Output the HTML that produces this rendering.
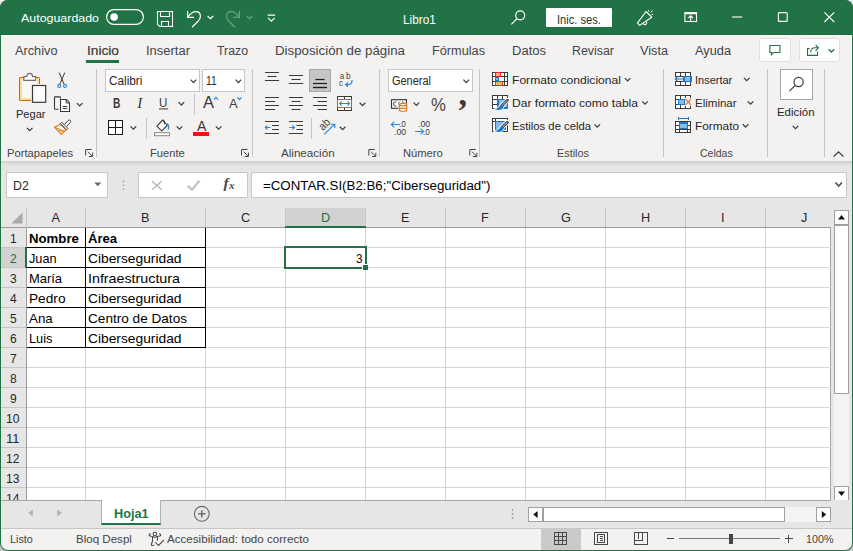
<!DOCTYPE html>
<html lang="es"><head><meta charset="utf-8"><title>Libro1 - Excel</title>
<style>
html,body{margin:0;padding:0;background:#c6c6c6;}
body{background:linear-gradient(#f1ebef 0,#f1ebef 50%,#c6c6c6 50%,#c6c6c6 100%);}
body{width:853px;height:551px;overflow:hidden;font-family:"Liberation Sans",sans-serif;}
#app{position:relative;width:853px;height:551px;overflow:hidden;background:#217346;border-radius:8px;}
#app div{position:absolute;box-sizing:border-box;}
.t{position:absolute;white-space:pre;transform-origin:0 50%;font-family:"Liberation Sans",sans-serif;}
#icons{position:absolute;left:0;top:0;}

</style></head>
<body>
<div id="app">
<div id="title" style="left:0;top:0;width:853px;height:35px;background:#217346;border-bottom:1px solid #1f6c42"></div>
<div id="ribbon" style="left:1px;top:35px;width:851px;height:126px;background:#f3f2f1;border-top:1px solid #fff;border-left:1px solid #fbfbfa;border-right:1px solid #fbfbfa"></div>
<div id="tabul" style="left:86px;top:60px;width:33px;height:3px;background:#217346"></div>
<div id="mid" style="left:1px;top:161px;width:851px;height:340px;background:#e6e6e6"></div>
<div id="shadow" style="left:1px;top:161px;width:851px;height:5px;background:linear-gradient(#d0d0d0,#e6e6e6)"></div>
<!-- signin -->
<div style="left:546px;top:8px;width:66px;height:19px;background:#fff;border-radius:1px"></div>
<!-- comment/share buttons -->
<div style="left:759px;top:38px;width:32px;height:24px;background:#fff;border:1px solid #e1dfdd;border-radius:3px"></div>
<div style="left:799px;top:38px;width:41px;height:24px;background:#fff;border:1px solid #e1dfdd;border-radius:3px"></div>
<!-- ribbon separators -->
<div class="sep" style="left:96px;top:69px;width:1px;height:88px;background:#c8c6c4"></div>
<div class="sep" style="left:252px;top:69px;width:1px;height:88px;background:#c8c6c4"></div>
<div class="sep" style="left:379px;top:69px;width:1px;height:88px;background:#c8c6c4"></div>
<div class="sep" style="left:479px;top:69px;width:1px;height:88px;background:#c8c6c4"></div>
<div class="sep" style="left:663px;top:69px;width:1px;height:88px;background:#c8c6c4"></div>
<div class="sep" style="left:767px;top:69px;width:1px;height:88px;background:#c8c6c4"></div>
<div class="sep" style="left:824px;top:69px;width:1px;height:88px;background:#c8c6c4"></div>
<div class="sep" style="left:194px;top:94px;width:1px;height:21px;background:#c8c6c4"></div>
<div class="sep" style="left:146px;top:118px;width:1px;height:21px;background:#c8c6c4"></div>
<div class="sep" style="left:311px;top:118px;width:1px;height:21px;background:#c8c6c4"></div>
<!-- combo boxes -->
<div style="left:105px;top:69px;width:95px;height:23px;background:#fff;border:1px solid #c8c6c4"></div>
<div style="left:202px;top:69px;width:43px;height:23px;background:#fff;border:1px solid #c8c6c4"></div>
<div style="left:388px;top:69px;width:85px;height:23px;background:#fff;border:1px solid #c8c6c4"></div>
<!-- selected align bottom -->
<div style="left:309px;top:69px;width:22px;height:23px;background:#c8c6c4;border:1px solid #a8a6a4"></div>
<!-- Edicion box -->
<div style="left:780px;top:69px;width:33px;height:31px;background:#fff;border:1px solid #a6a6a6"></div>
<!-- formula bar -->
<div style="left:6px;top:172px;width:102px;height:26px;background:#fff;border:1px solid #c6c6c6;border-radius:1px"></div>
<div style="left:138px;top:172px;width:110px;height:26px;background:#fff;border:1px solid #c6c6c6;border-radius:1px"></div>
<div style="left:251px;top:172px;width:596px;height:26px;background:#fff;border:1px solid #c6c6c6;border-radius:1px"></div>
<!-- grid -->
<div id="grid" style="left:1px;top:208px;width:830px;height:292px;background:#fff"></div>
<div id="colhdr" style="left:1px;top:208px;width:830px;height:19px;background:#e6e6e6"></div>
<div id="rowhdr" style="left:1px;top:208px;width:25px;height:292px;background:#e6e6e6"></div>
<div id="dhdr" style="left:285px;top:208px;width:81px;height:20px;background:#d2d2d2"></div><div style="left:285px;top:226px;width:81px;height:2px;background:#217346;z-index:3"></div>
<div id="r2hdr" style="left:1px;top:248px;width:25px;height:19px;background:#d2d2d2"></div><div style="left:25px;top:247px;width:2px;height:21px;background:#217346;z-index:3"></div>
<div id="sel" style="left:284px;top:246px;width:83px;height:23px;border:2px solid #217346;z-index:3"></div>
<div id="selh" style="left:362px;top:264px;width:6px;height:6px;background:#217346;border:1px solid #fff;border-right:0;border-bottom:0;z-index:4"></div>
<!-- v scrollbar -->
<div style="left:831px;top:208px;width:21px;height:293px;background:#e6e6e6"></div>
<div style="left:834px;top:225px;width:15px;height:262px;background:#f3f3f3"></div>
<div style="left:834px;top:210px;width:15px;height:15px;background:#fff;border:1px solid #a0a0a0"></div>
<div style="left:834px;top:225px;width:15px;height:169px;background:#fff;border:1px solid #a0a0a0"></div>
<div style="left:834px;top:486px;width:15px;height:15px;background:#fff;border:1px solid #a0a0a0"></div>
<div style="left:830px;top:227px;width:1px;height:274px;background:#a6a6a6"></div>
<!-- sheet tabs / status -->
<div id="tabbar" style="left:1px;top:500px;width:851px;height:29px;background:#e6e6e6;border-bottom:1px solid #c6c6c6"></div><div style="left:1px;top:500px;width:830px;height:1px;background:#a6a6a6"></div>
<div id="sheettab" style="left:101px;top:500px;width:60px;height:25px;background:#fff;border-left:1px solid #b0b0b0;border-right:1px solid #b0b0b0;border-bottom:2px solid #217346"></div>
<div id="status" style="left:1px;top:529px;width:851px;height:21px;background:#f3f2f1;border-radius:0 0 7px 7px"></div>
<div style="left:541px;top:529px;width:40px;height:21px;background:#cacaca"></div>
<!-- h scrollbar -->
<div style="left:785px;top:507px;width:32px;height:15px;background:#f3f3f3"></div>
<div style="left:528px;top:507px;width:15px;height:15px;background:#fff;border:1px solid #a0a0a0"></div>
<div style="left:543px;top:507px;width:242px;height:15px;background:#fff;border:1px solid #a0a0a0"></div>
<div style="left:816px;top:507px;width:15px;height:15px;background:#fff;border:1px solid #a0a0a0"></div>

<svg id="icons" width="853" height="551" viewBox="0 0 853 551">
<g id="gridlines" shape-rendering="crispEdges" fill="none" stroke-width="1">
<line x1="27" y1="247.5" x2="831" y2="247.5" stroke="#d4d4d4"/>
<line x1="1" y1="247.5" x2="26" y2="247.5" stroke="#c6c6c6"/>
<line x1="27" y1="267.5" x2="831" y2="267.5" stroke="#d4d4d4"/>
<line x1="1" y1="267.5" x2="26" y2="267.5" stroke="#c6c6c6"/>
<line x1="27" y1="287.5" x2="831" y2="287.5" stroke="#d4d4d4"/>
<line x1="1" y1="287.5" x2="26" y2="287.5" stroke="#c6c6c6"/>
<line x1="27" y1="307.5" x2="831" y2="307.5" stroke="#d4d4d4"/>
<line x1="1" y1="307.5" x2="26" y2="307.5" stroke="#c6c6c6"/>
<line x1="27" y1="327.5" x2="831" y2="327.5" stroke="#d4d4d4"/>
<line x1="1" y1="327.5" x2="26" y2="327.5" stroke="#c6c6c6"/>
<line x1="27" y1="347.5" x2="831" y2="347.5" stroke="#d4d4d4"/>
<line x1="1" y1="347.5" x2="26" y2="347.5" stroke="#c6c6c6"/>
<line x1="27" y1="367.5" x2="831" y2="367.5" stroke="#d4d4d4"/>
<line x1="1" y1="367.5" x2="26" y2="367.5" stroke="#c6c6c6"/>
<line x1="27" y1="387.5" x2="831" y2="387.5" stroke="#d4d4d4"/>
<line x1="1" y1="387.5" x2="26" y2="387.5" stroke="#c6c6c6"/>
<line x1="27" y1="407.5" x2="831" y2="407.5" stroke="#d4d4d4"/>
<line x1="1" y1="407.5" x2="26" y2="407.5" stroke="#c6c6c6"/>
<line x1="27" y1="427.5" x2="831" y2="427.5" stroke="#d4d4d4"/>
<line x1="1" y1="427.5" x2="26" y2="427.5" stroke="#c6c6c6"/>
<line x1="27" y1="447.5" x2="831" y2="447.5" stroke="#d4d4d4"/>
<line x1="1" y1="447.5" x2="26" y2="447.5" stroke="#c6c6c6"/>
<line x1="27" y1="467.5" x2="831" y2="467.5" stroke="#d4d4d4"/>
<line x1="1" y1="467.5" x2="26" y2="467.5" stroke="#c6c6c6"/>
<line x1="27" y1="487.5" x2="831" y2="487.5" stroke="#d4d4d4"/>
<line x1="1" y1="487.5" x2="26" y2="487.5" stroke="#c6c6c6"/>
<line x1="85.5" y1="228" x2="85.5" y2="500" stroke="#d4d4d4"/>
<line x1="85.5" y1="208" x2="85.5" y2="227" stroke="#c6c6c6"/>
<line x1="205.5" y1="228" x2="205.5" y2="500" stroke="#d4d4d4"/>
<line x1="205.5" y1="208" x2="205.5" y2="227" stroke="#c6c6c6"/>
<line x1="285.5" y1="228" x2="285.5" y2="500" stroke="#d4d4d4"/>
<line x1="285.5" y1="208" x2="285.5" y2="227" stroke="#c6c6c6"/>
<line x1="365.5" y1="228" x2="365.5" y2="500" stroke="#d4d4d4"/>
<line x1="365.5" y1="208" x2="365.5" y2="227" stroke="#c6c6c6"/>
<line x1="445.5" y1="228" x2="445.5" y2="500" stroke="#d4d4d4"/>
<line x1="445.5" y1="208" x2="445.5" y2="227" stroke="#c6c6c6"/>
<line x1="525.5" y1="228" x2="525.5" y2="500" stroke="#d4d4d4"/>
<line x1="525.5" y1="208" x2="525.5" y2="227" stroke="#c6c6c6"/>
<line x1="605.5" y1="228" x2="605.5" y2="500" stroke="#d4d4d4"/>
<line x1="605.5" y1="208" x2="605.5" y2="227" stroke="#c6c6c6"/>
<line x1="685.5" y1="228" x2="685.5" y2="500" stroke="#d4d4d4"/>
<line x1="685.5" y1="208" x2="685.5" y2="227" stroke="#c6c6c6"/>
<line x1="765.5" y1="228" x2="765.5" y2="500" stroke="#d4d4d4"/>
<line x1="765.5" y1="208" x2="765.5" y2="227" stroke="#c6c6c6"/>
<line x1="1" y1="227.5" x2="831" y2="227.5" stroke="#9b9b9b"/>
<line x1="26.5" y1="208" x2="26.5" y2="228" stroke="#c6c6c6"/>
<line x1="26.5" y1="228" x2="26.5" y2="500" stroke="#9b9b9b"/>
<line x1="27" y1="247.5" x2="206" y2="247.5" stroke="#000"/>
<line x1="27" y1="267.5" x2="206" y2="267.5" stroke="#000"/>
<line x1="27" y1="287.5" x2="206" y2="287.5" stroke="#000"/>
<line x1="27" y1="307.5" x2="206" y2="307.5" stroke="#000"/>
<line x1="27" y1="327.5" x2="206" y2="327.5" stroke="#000"/>
<line x1="27" y1="347.5" x2="206" y2="347.5" stroke="#000"/>
<line x1="85.5" y1="228" x2="85.5" y2="348" stroke="#000"/>
<line x1="205.5" y1="228" x2="205.5" y2="348" stroke="#000"/>
</g>
<path d="M22.5 212.5 L22.5 223.5 L11.5 223.5 Z" fill="#a9a9a9"/>
<g id="titleicons" fill="none" stroke="#fff" stroke-width="1.2">
<rect x="106.6" y="9.6" width="36.8" height="14.8" rx="7.4"/>
<circle cx="114.1" cy="17" r="3.8" fill="#fff" stroke="none"/>
<g stroke-width="1.1">
<path d="M157.5 11.5 H172.5 V26.5 H159.7 L157.5 24.3 Z"/>
<path d="M160.5 11.5 V16.5 H169.5 V11.5"/>
<path d="M161.5 26.5 V21.5 H168.5 V26.5"/>
</g>
<path d="M187.6 11 V17.4 H194" stroke-width="1.2"/>
<path d="M187.8 17.2 C190.5 13.2 193.2 11.6 196 11.6 C198.8 11.6 200.4 13.8 200.4 16.4 C200.4 18.6 199.3 20 197.8 21.5 L192 27.2"/>
<path d="M207.6 16 L210.4 18.7 L213.2 16"/>
<g opacity="0.33">
<path d="M239.4 11 V17.4 H233"/>
<path d="M239.2 17.2 C236.5 13.2 233.8 11.6 231 11.6 C228.2 11.6 226.6 13.8 226.6 16.4 C226.6 18.6 227.7 20 229.2 21.5 L235 27.2"/>
<path d="M246.8 16 L249.6 18.7 L252.4 16"/>
</g>
<path d="M267.6 15.1 H275.2 M268 17.9 L271.4 21.2 L274.8 17.9"/>
<!-- search -->
<circle cx="520.2" cy="15.3" r="4.5"/>
<path d="M517 18.6 L511.4 24.4"/>
<!-- megaphone -->
<path d="M646 11.5 L651.7 17.2 L639.7 25.4 L637.4 23.1 Z" stroke-linejoin="round" stroke-width="1.1"/>
<path d="M643 23.3 C643.4 24.6 645 25 646 24.2 C646.8 23.6 647 22.6 646.4 21.6" stroke-width="1.1"/>
<path d="M648.3 10.2 L648.9 11.8 M650.8 12.4 L652.7 10.4 M651.4 14.7 L653.1 14.2" stroke-width="1"/>
<!-- ribbon display -->
<rect x="684.9" y="12.7" width="11.6" height="8.8" stroke-width="1.1"/>
<path d="M684.9 13.4 H696.5" stroke-width="1.8"/>
<path d="M690.7 21.4 V16.2 M688.4 18 L690.7 15.8 L693 18" stroke-width="1.1"/>
<!-- window controls -->
<path d="M732 17 H742.2" stroke-width="1.1"/>
<rect x="778.4" y="12.6" width="8.8" height="8.8" rx="1" stroke-width="1.1"/>
<path d="M824.4 12.3 L834.2 22 M834.2 12.3 L824.4 22" stroke-width="1.1"/>
</g>
<g id="tabicons" fill="none" stroke="#217346" stroke-width="1.1">
<path d="M769.9 45.5 H779.9 V52.5 H773.6 L771.4 54.6 V52.5 H769.9 Z"/>
<path d="M809.6 48.6 H807.5 V55.4 H817.5 V51.6"/>
<path d="M810.6 52.4 C810.8 49.4 812.6 47.8 815.2 47.8 H818.2 M815.6 44.8 L818.4 47.8 L815.6 50.8"/>
<path d="M828.6 49.2 L831.4 52 L834.2 49.2" stroke-width="1.3"/>
</g>
<g id="clip">
<rect x="19.5" y="77.5" width="20" height="23" rx="0.6" fill="#ffdb92" stroke="#c8690e" stroke-width="1"/>
<rect x="22" y="79.6" width="15.2" height="18.6" fill="#f8f8f8"/>
<path d="M23.8 80.4 V76.6 H26.8 C26.9 74.6 28.1 73.4 29.7 73.4 C31.3 73.4 32.5 74.6 32.6 76.6 H35.6 V80.4 Z" fill="#fff" stroke="#707070" stroke-width="1.1"/>
<rect x="31" y="84" width="16" height="19.6" fill="#f3f2f1"/>
<rect x="32.5" y="85.5" width="13.2" height="16.8" fill="#fcfcfc" stroke="#3b3a39" stroke-width="1.2"/>
<path d="M26.90 127.85 L29.70 130.75 L32.50 127.85" fill="none" stroke="#3b3a39" stroke-width="1.2"/>
<path d="M59.2 72.6 L64.2 84.4 M64.8 72.6 L59.8 84.4" stroke="#3b3a39" stroke-width="1" fill="none"/>
<circle cx="59.2" cy="85.9" r="1.5" fill="none" stroke="#2b88d8" stroke-width="1.1"/>
<circle cx="65" cy="85.9" r="1.5" fill="none" stroke="#2b88d8" stroke-width="1.1"/>
<path d="M60.5 98.4 V97.7 C60.5 97.2 60.2 96.9 59.7 96.9 H55.1 C54.7 96.9 54.5 97.2 54.5 97.6 V108.6 C54.5 109 54.7 109.3 55.1 109.3 H58.4" fill="none" stroke="#3b3a39" stroke-width="1.1"/>
<path d="M60.5 99.5 H66.4 L69.5 102.7 V111.5 H60.5 Z" fill="#fff" stroke="#3b3a39" stroke-width="1.1"/>
<path d="M66.2 99.8 V103 H69.3" fill="none" stroke="#3b3a39" stroke-width="1"/>
<path d="M62.6 106.5 H67.4 M62.6 108.6 H67.4" stroke="#3b3a39" stroke-width="1"/>
<path d="M76.90 103.05 L79.70 105.95 L82.50 103.05" fill="none" stroke="#3b3a39" stroke-width="1.2"/>
<path d="M60.4 124.4 L54.6 127.2 L61.2 134.4 L66.2 129.8 Z" fill="#fff" stroke="#d87b1e" stroke-width="1.1"/>
<path d="M57.4 130.2 L61.2 134.2 L64.4 131.4 Z" fill="#fbd28a" stroke="#d87b1e" stroke-width="0.8"/>
<path d="M54.8 127.3 L64.8 131.3" stroke="#d87b1e" stroke-width="1" fill="none"/>
<path d="M64.7 124.1 L68.2 120.5 C68.8 119.9 69.7 119.9 70.3 120.5 C70.9 121.1 70.9 122 70.3 122.6 L66.8 126.1" fill="#fff" stroke="#3b3a39" stroke-width="1"/>
<path d="M61.7 122.2 L67.9 128.4 L66.5 129.8 L60.3 123.6 Z" fill="#fff" stroke="#3b3a39" stroke-width="1"/>
<path d="M85.6 155.5 V149.5 H91.6 M87.8 151.7 L92.19999999999999 156.1 M92.6 152.7 V156.5 H88.8" fill="none" stroke="#484644" stroke-width="1"/>
</g>
<g id="fontgrp">
<path d="M190.70 79.65 L193.50 82.55 L196.30 79.65" fill="none" stroke="#3b3a39" stroke-width="1.2"/>
<path d="M235.60 79.65 L238.40 82.55 L241.20 79.65" fill="none" stroke="#3b3a39" stroke-width="1.2"/>
<path d="M159 108.9 H168.2" stroke="#3b3a39" stroke-width="1"/>
<path d="M178.60 102.15 L181.40 105.05 L184.20 102.15" fill="none" stroke="#3b3a39" stroke-width="1.2"/>
<path d="M214 99.6 L216 97.4 L218 99.6" fill="none" stroke="#2b88d8" stroke-width="1.2"/>
<path d="M237.4 97.4 L239.4 99.6 L241.4 97.4" fill="none" stroke="#2b88d8" stroke-width="1.2"/>
<g shape-rendering="crispEdges"><rect x="108.5" y="120.5" width="14" height="14" fill="#fff" stroke="#1b1b1b" stroke-width="1.4"/>
<path d="M115.5 120.5 V134.5 M108.5 127.5 H122.5" stroke="#1b1b1b" stroke-width="1.4"/></g>
<path d="M130.60 126.35 L133.40 129.25 L136.20 126.35" fill="none" stroke="#3b3a39" stroke-width="1.2"/>
<path d="M162.8 120 L156.9 126.2 L161.7 130.9 L167.2 125.5 Z" fill="#fff" stroke="#3b3a39" stroke-width="1.1" stroke-linejoin="round"/>
<path d="M162.8 120 C164.2 120.6 164.8 122.2 164.4 124.2" fill="none" stroke="#3b3a39" stroke-width="1.1"/>
<path d="M166.6 123.6 C168.6 124.6 169 127.2 168.2 129.6" fill="none" stroke="#2b88d8" stroke-width="1.3"/>
<rect x="154.5" y="132.7" width="15" height="3" fill="#fff" stroke="#8a8886" stroke-width="1"/>
<path d="M176.70 126.35 L179.50 129.25 L182.30 126.35" fill="none" stroke="#3b3a39" stroke-width="1.2"/>
<rect x="193" y="132" width="16" height="4" fill="#ee1111"/>
<path d="M215.80 126.35 L218.60 129.25 L221.40 126.35" fill="none" stroke="#3b3a39" stroke-width="1.2"/>
<path d="M241.5 155.5 V149.5 H247.5 M243.7 151.7 L248.1 156.1 M248.5 152.7 V156.5 H244.7" fill="none" stroke="#484644" stroke-width="1"/>
</g>
<g id="aligngrp" fill="none">
<path d="M265 72.5 H279" stroke="#3b3a39" stroke-width="1"/>
<path d="M267.5 76.5 H276.5" stroke="#3b3a39" stroke-width="1"/>
<path d="M265 80.5 H279" stroke="#3b3a39" stroke-width="1"/>
<path d="M289 75.5 H303" stroke="#3b3a39" stroke-width="1"/>
<path d="M291.5 79.5 H300.5" stroke="#3b3a39" stroke-width="1"/>
<path d="M289 83.5 H303" stroke="#3b3a39" stroke-width="1"/>
<path d="M315.5 79.5 H324.5" stroke="#1b1b1b" stroke-width="1.2"/>
<path d="M313 83.5 H327" stroke="#1b1b1b" stroke-width="1.2"/>
<path d="M313 87.5 H327" stroke="#1b1b1b" stroke-width="1.4"/>
<path d="M265 97.5 H279" stroke="#3b3a39" stroke-width="1"/>
<path d="M289 97.5 H303" stroke="#3b3a39" stroke-width="1"/>
<path d="M313 97.5 H327" stroke="#3b3a39" stroke-width="1"/>
<path d="M265 101.5 H275" stroke="#3b3a39" stroke-width="1"/>
<path d="M291.5 101.5 H300.5" stroke="#3b3a39" stroke-width="1"/>
<path d="M317.5 101.5 H327" stroke="#3b3a39" stroke-width="1"/>
<path d="M265 105.5 H279" stroke="#3b3a39" stroke-width="1"/>
<path d="M289 105.5 H303" stroke="#3b3a39" stroke-width="1"/>
<path d="M313 105.5 H327" stroke="#3b3a39" stroke-width="1"/>
<path d="M265 109.5 H275" stroke="#3b3a39" stroke-width="1"/>
<path d="M291.5 109.5 H300.5" stroke="#3b3a39" stroke-width="1"/>
<path d="M317.5 109.5 H327" stroke="#3b3a39" stroke-width="1"/>
<rect x="337.5" y="96.5" width="14" height="14" stroke="#3b3a39" stroke-width="1" fill="#fff" shape-rendering="crispEdges"/>
<path d="M344.5 96.5 V99.5 M344.5 107.5 V110.5" stroke="#3b3a39" stroke-width="1" shape-rendering="crispEdges"/>
<rect x="337.5" y="99.5" width="14" height="8" stroke="#2b88d8" stroke-width="1" fill="#fff" shape-rendering="crispEdges"/>
<path d="M339.6 103.5 H349.6 M341.7 101.4 L339.5 103.5 L341.7 105.6 M347.5 101.4 L349.7 103.5 L347.5 105.6" stroke="#2b88d8" stroke-width="1.1"/>
<path d="M359.70 102.75 L362.50 105.65 L365.30 102.75" fill="none" stroke="#3b3a39" stroke-width="1.2"/>
<path d="M265 121.5 H279" stroke="#3b3a39" stroke-width="1"/>
<path d="M289 121.5 H303" stroke="#3b3a39" stroke-width="1"/>
<path d="M265 133.5 H279" stroke="#3b3a39" stroke-width="1"/>
<path d="M289 133.5 H303" stroke="#3b3a39" stroke-width="1"/>
<path d="M272 125.5 H279" stroke="#3b3a39" stroke-width="1"/>
<path d="M296.5 125.5 H303" stroke="#3b3a39" stroke-width="1"/>
<path d="M272 129.5 H279" stroke="#3b3a39" stroke-width="1"/>
<path d="M296.5 129.5 H303" stroke="#3b3a39" stroke-width="1"/>
<path d="M265.4 127.5 H270.4 M267.4 125.4 L265.3 127.5 L267.4 129.6" stroke="#2b88d8" stroke-width="1.1"/>
<path d="M289.2 127.5 H294.4 M292.4 125.4 L294.5 127.5 L292.4 129.6" stroke="#2b88d8" stroke-width="1.1"/>
<path d="M324.2 134.4 L334.4 124.3 M330.8 124.2 H334.8 V128" stroke="#2b88d8" stroke-width="1.1"/>
<path d="M339.80 126.75 L342.60 129.65 L345.40 126.75" fill="none" stroke="#3b3a39" stroke-width="1.2"/>
<path d="M352 80 C352.4 82.8 350.6 84.7 348 84.7 H345.6 M347.9 82.5 L345.6 84.7 L347.9 86.9" stroke="#2b88d8" stroke-width="1.2"/>
<path d="M368.8 155.5 V149.5 H374.8 M371.0 151.7 L375.40000000000003 156.1 M375.8 152.7 V156.5 H372.0" fill="none" stroke="#484644" stroke-width="1"/>
</g>
<g id="numgrp" fill="none">
<path d="M463.40 79.65 L466.20 82.55 L469.00 79.65" fill="none" stroke="#3b3a39" stroke-width="1.2"/>
<rect x="391.5" y="99.7" width="14.9" height="8.6" fill="#fff" stroke="#3b3a39" stroke-width="1.2"/>
<path d="M396.4 101.9 C394.6 101.5 393.6 102.6 393.6 104 C393.6 105.4 394.6 106.5 396.4 106.1" stroke="#3b3a39" stroke-width="1"/>
<path d="M399.6 101.8 C398.2 102.4 398.2 105.6 399.6 106.2 M402 101.8 C403.4 102.2 404.2 103 404.2 104" stroke="#3b3a39" stroke-width="1"/>
<path d="M399.4 104.6 V110.2 C399.4 111.6 406.6 111.6 406.6 110.2 V104.6 Z" fill="#fff" stroke="#f3f2f1" stroke-width="2.4"/>
<path d="M399.4 104.6 V110.2 C399.4 111.6 406.6 111.6 406.6 110.2 V104.6" fill="#fff" stroke="#d87b1e" stroke-width="1.2"/>
<ellipse cx="403" cy="104.6" rx="3.6" ry="1.3" fill="#fff" stroke="#d87b1e" stroke-width="1.2"/>
<path d="M399.4 107.4 C399.4 108.8 406.6 108.8 406.6 107.4" stroke="#d87b1e" stroke-width="1.2"/>
<path d="M413.60 102.55 L416.40 105.45 L419.20 102.55" fill="none" stroke="#3b3a39" stroke-width="1.2"/>
<path d="M391.4 124.5 H400 M394.2 121.7 L391.3 124.5 L394.2 127.3" stroke="#2b88d8" stroke-width="1.1"/>
<path d="M415.2 131.5 H423.4 M420.6 128.7 L423.5 131.5 L420.6 134.3" stroke="#2b88d8" stroke-width="1.1"/>
<path d="M469.8 155.5 V149.5 H475.8 M472.0 151.7 L476.40000000000003 156.1 M476.8 152.7 V156.5 H473.0" fill="none" stroke="#484644" stroke-width="1"/>
</g>
<g id="stylegrp" fill="none">
<g shape-rendering="crispEdges">
<rect x="492.5" y="72.5" width="15" height="13" fill="#fff" stroke="#3b3a39" stroke-width="1"/>
<path d="M492.5 76.5 H507.5 M492.5 81.5 H507.5 M495.5 72.5 V85.5 M504.5 72.5 V85.5" stroke="#3b3a39" stroke-width="1"/>
<rect x="495.5" y="72.5" width="5" height="4" fill="#f6b868" stroke="#e8262a" stroke-width="1.2"/>
<rect x="495.6" y="77.2" width="3" height="3.8" fill="#83bbec" stroke="#1e78c8" stroke-width="1.2"/>
<rect x="495.5" y="81.5" width="7" height="4" fill="#f6b868" stroke="#e8262a" stroke-width="1.2"/>
</g>
<g shape-rendering="crispEdges">
<rect x="492.5" y="95.5" width="15" height="13" fill="#fff" stroke="#3b3a39" stroke-width="1"/>
<path d="M492.5 99.5 H507.5 M492.5 104.5 H498 M497.5 95.5 V108.5 M502.5 95.5 V99.5" stroke="#3b3a39" stroke-width="1"/>
<rect x="498" y="99.5" width="9.5" height="8.5" fill="#83bbec" stroke="#1e78c8" stroke-width="1.2"/>
</g>
<path d="M507.4 100.2 L501.79999999999995 105.5" stroke="#fff" stroke-width="4.6" stroke-linecap="round"/><path d="M502.2 104.60000000000001 C499.79999999999995 105.2 499.0 108.2 495.0 109.2 C498.4 110.8 503.0 110.0 503.79999999999995 106.4 Z" fill="#fff" stroke="#fff" stroke-width="1.6"/><path d="M507.4 100.2 L501.79999999999995 105.5" stroke="#3b3a39" stroke-width="2.8" stroke-linecap="round"/><path d="M507.29999999999995 100.3 L502.2 105.10000000000001" stroke="#d8d8d8" stroke-width="1"/><path d="M502.2 104.60000000000001 C499.79999999999995 105.2 499.0 108.2 495.0 109.2 C498.4 110.8 503.0 110.0 503.79999999999995 106.4 Z" fill="#1e78c8"/>
<g shape-rendering="crispEdges">
<rect x="492.5" y="118.5" width="15" height="13" fill="#fff" stroke="#3b3a39" stroke-width="1"/>
<path d="M492.5 121.5 H507.5 M495.5 118.5 V131.5" stroke="#3b3a39" stroke-width="1"/>
<rect x="495.5" y="121.5" width="9.5" height="8" fill="#83bbec" stroke="#1e78c8" stroke-width="1.2"/>
</g>
<path d="M507.4 122.2 L501.79999999999995 127.5" stroke="#fff" stroke-width="4.6" stroke-linecap="round"/><path d="M502.2 126.60000000000001 C499.79999999999995 127.2 499.0 130.2 495.0 131.2 C498.4 132.8 503.0 132.0 503.79999999999995 128.4 Z" fill="#fff" stroke="#fff" stroke-width="1.6"/><path d="M507.4 122.2 L501.79999999999995 127.5" stroke="#3b3a39" stroke-width="2.8" stroke-linecap="round"/><path d="M507.29999999999995 122.3 L502.2 127.10000000000001" stroke="#d8d8d8" stroke-width="1"/><path d="M502.2 126.60000000000001 C499.79999999999995 127.2 499.0 130.2 495.0 131.2 C498.4 132.8 503.0 132.0 503.79999999999995 128.4 Z" fill="#1e78c8"/>
<path d="M624.80 78.05 L627.60 80.95 L630.40 78.05" fill="none" stroke="#3b3a39" stroke-width="1.2"/>
<path d="M642.20 101.35 L645.00 104.25 L647.80 101.35" fill="none" stroke="#3b3a39" stroke-width="1.2"/>
<path d="M594.50 124.35 L597.30 127.25 L600.10 124.35" fill="none" stroke="#3b3a39" stroke-width="1.2"/>
</g>
<g id="cellgrp" fill="none">
<g shape-rendering="crispEdges">
<rect x="675.5" y="72.5" width="15" height="13" fill="#fff" stroke="#3b3a39" stroke-width="1"/>
<path d="M675.5 76.5 H690.5 M675.5 81.5 H690.5 M680.5 72.5 V85.5 M685.5 72.5 V85.5" stroke="#3b3a39" stroke-width="1"/>
<rect x="674" y="77" width="10" height="4" fill="#f3f2f1" stroke="none"/>
<rect x="684" y="76.5" width="7" height="5" fill="#83bbec" stroke="#1e78c8" stroke-width="1.2"/>
</g>
<path d="M675.2 79 H684 M677.6 76.7 L675.2 79 L677.6 81.3" stroke="#1e78c8" stroke-width="1.1"/>
<g shape-rendering="crispEdges">
<rect x="675.5" y="95.5" width="15" height="13" fill="#fff" stroke="#3b3a39" stroke-width="1"/>
<path d="M675.5 99.5 H690.5 M675.5 104.5 H690.5 M680.5 95.5 V108.5 M685.5 95.5 V108.5" stroke="#3b3a39" stroke-width="1"/>
<rect x="684.6" y="98.2" width="7.4" height="7.6" fill="#f3f2f1" stroke="none"/>
<rect x="678.5" y="99.5" width="6" height="5" fill="#83bbec" stroke="#1e78c8" stroke-width="1.2"/>
</g>
<path d="M685.6 99.2 L691 104.8 M691 99.2 L685.6 104.8" stroke="#e8701a" stroke-width="1.2"/>
<g shape-rendering="crispEdges">
<rect x="675.5" y="121.5" width="15" height="11" fill="#fff" stroke="#3b3a39" stroke-width="1"/>
<path d="M675.5 125.5 H690.5 M675.5 129.5 H690.5 M679.5 121.5 V132.5 M687.5 121.5 V132.5" stroke="#3b3a39" stroke-width="1"/>
<rect x="679.5" y="123" width="8" height="5.5" fill="#83bbec" stroke="#1e78c8" stroke-width="1.2"/>
<path d="M678.5 118.5 H688.5 M678.5 116.8 V120.2 M688.5 116.8 V120.2" stroke="#1e78c8" stroke-width="1"/>
</g>
<path d="M743.90 77.85 L746.70 80.75 L749.50 77.85" fill="none" stroke="#3b3a39" stroke-width="1.2"/>
<path d="M747.80 101.35 L750.60 104.25 L753.40 101.35" fill="none" stroke="#3b3a39" stroke-width="1.2"/>
<path d="M742.80 124.25 L745.60 127.15 L748.40 124.25" fill="none" stroke="#3b3a39" stroke-width="1.2"/>
</g>
<g id="editgrp" fill="none">
<circle cx="798.6" cy="82" r="4.6" stroke="#3b3a39" stroke-width="1.2"/>
<path d="M795.2 85.4 L789.4 91.2" stroke="#3b3a39" stroke-width="1.2"/>
<path d="M792.70 125.85 L795.50 128.75 L798.30 125.85" fill="none" stroke="#3b3a39" stroke-width="1.2"/>
<path d="M833.6 156.6 L838.5 151.8 L843.4 156.6" stroke="#3b3a39" stroke-width="1.3"/>
</g>
<g id="fbar" fill="none">
<path d="M94.2 182.6 H101.4 L97.8 186.2 Z" fill="#6a6a6a"/>
<circle cx="123.5" cy="181.5" r="0.9" fill="#a6a6a6"/><circle cx="123.5" cy="185.3" r="0.9" fill="#a6a6a6"/><circle cx="123.5" cy="189.1" r="0.9" fill="#a6a6a6"/>
<path d="M152 181.2 L161.6 189.8 M161.6 181.2 L152 189.8" stroke="#b8b8b8" stroke-width="1.5"/>
<path d="M187.6 185.8 L192 189.6 L199.4 180.8" stroke="#c2c2c2" stroke-width="2.2"/>
<path d="M835.40 182.50 L838.70 186.10 L842.00 182.50" fill="none" stroke="#505050" stroke-width="1.7"/>
</g>
<g id="bottom" fill="none">
<path d="M32.8 509.6 V516.4 L28.2 513 Z" fill="#b4b4b4"/>
<path d="M57.2 509.6 V516.4 L61.8 513 Z" fill="#b4b4b4"/>
<circle cx="201.8" cy="513.8" r="7.4" stroke="#6e6e6e" stroke-width="1.1"/>
<path d="M198.2 513.8 H205.4 M201.8 510.2 V517.4" stroke="#6e6e6e" stroke-width="1.5"/>
<g stroke="#444" stroke-width="1.05" stroke-linecap="round">
<circle cx="154.9" cy="534" r="1.8"/>
<path d="M150.4 533.7 C148.8 534 148.7 535.9 150.3 536.1 L152.5 536.6 V540.4 C152.5 542.4 151.3 543.6 151.3 544.5 C151.3 545.6 152.6 545.8 153.7 545.1"/>
<path d="M159.4 533.7 C161 534 161.1 535.9 159.5 536.1 L157.4 536.6 V540.2"/>
<path d="M152.5 536.6 C154 537.3 155.9 537.3 157.4 536.6"/>
<path d="M155.5 542.5 L158.4 545.4 L163.7 540.3"/>
</g>
<path d="M512.5 509 V511 M512.5 513 V515 M512.5 517 V519" stroke="#a0a0a0" stroke-width="1.4"/>
<path d="M537.6 511 V518 L533.2 514.5 Z" fill="#111"/>
<path d="M821.8 511 V518 L826.2 514.5 Z" fill="#111"/>
<path d="M838 219.4 H845 L841.5 215 Z" fill="#111"/>
<path d="M838 491.6 H845 L841.5 496 Z" fill="#111"/>
</g>
<g id="statusr" fill="none" shape-rendering="crispEdges">
<rect x="554.5" y="532.5" width="12" height="12" stroke="#484848" stroke-width="1.3"/>
<path d="M558.5 532.5 V544.5 M562.5 532.5 V544.5 M554.5 536.5 H566.5 M554.5 540.5 H566.5" stroke="#484848" stroke-width="1.3"/>
<rect x="594.5" y="532.5" width="13" height="12" stroke="#484848" stroke-width="1.3"/>
<rect x="597.5" y="534.5" width="7" height="8" stroke="#484848" stroke-width="1"/>
<path d="M599.5 536.5 H603 M599.5 538.5 H603 M599.5 540.5 H603" stroke="#484848" stroke-width="1"/>
<rect x="634.5" y="532.5" width="13" height="12" stroke="#484848" stroke-width="1.3"/>
<path d="M638.5 532.5 V539 M642.5 532.5 V540.5 M634.5 540.5 H643" stroke="#484848" stroke-width="1.3"/>
<path d="M667 538.5 H674" stroke="#484848" stroke-width="1"/>
<path d="M679 538.5 H779.5" stroke="#767676" stroke-width="1"/>
<rect x="728.5" y="533.5" width="4" height="10.5" fill="#444" stroke="none"/>
<path d="M784.5 538.5 H792.5 M788.5 534.5 V542.5" stroke="#484848" stroke-width="1"/>
</g>
</svg>
<span class="t" style="left:21px;top:8.00px;font-size:11.7px;line-height:20px;color:#ffffff;transform:scaleX(1.0621);">Autoguardado</span>
<span class="t" style="left:403.2px;top:10.00px;font-size:12.2px;line-height:20px;color:#ffffff;transform:scaleX(0.9678);">Libro1</span>
<span class="t" style="left:557.3px;top:10.00px;font-size:12.8px;line-height:20px;color:#1d3527;transform:scaleX(0.8693);">Inic. ses.</span>
<span class="t" style="left:15px;top:41.00px;font-size:12.3px;line-height:20px;color:#444444;transform:scaleX(1.0362);">Archivo</span>
<span class="t" style="left:87px;top:41.00px;font-size:12.3px;line-height:20px;color:#3b3a39;transform:scaleX(1.1143);-webkit-text-stroke:0.22px #3b3a39;">Inicio</span>
<span class="t" style="left:146px;top:41.00px;font-size:12.3px;line-height:20px;color:#444444;transform:scaleX(1.0551);">Insertar</span>
<span class="t" style="left:217px;top:41.00px;font-size:12.3px;line-height:20px;color:#444444;transform:scaleX(1.0005);">Trazo</span>
<span class="t" style="left:275px;top:41.00px;font-size:12.3px;line-height:20px;color:#444444;transform:scaleX(1.0804);">Disposición de página</span>
<span class="t" style="left:432px;top:41.00px;font-size:12.3px;line-height:20px;color:#444444;transform:scaleX(1.0341);">Fórmulas</span>
<span class="t" style="left:512px;top:41.00px;font-size:12.3px;line-height:20px;color:#444444;transform:scaleX(1.0584);">Datos</span>
<span class="t" style="left:572px;top:41.00px;font-size:12.3px;line-height:20px;color:#444444;transform:scaleX(1.0075);">Revisar</span>
<span class="t" style="left:640px;top:41.00px;font-size:12.3px;line-height:20px;color:#444444;transform:scaleX(1.0323);">Vista</span>
<span class="t" style="left:695px;top:41.00px;font-size:12.3px;line-height:20px;color:#444444;transform:scaleX(1.0388);">Ayuda</span>
<span class="t" style="left:15.5px;top:104.00px;font-size:11.3px;line-height:20px;color:#262626;transform:scaleX(0.9782);">Pegar</span>
<span class="t" style="left:7.3px;top:143.00px;font-size:11.3px;line-height:20px;color:#444444;transform:scaleX(0.9913);">Portapapeles</span>
<span class="t" style="left:108.6px;top:71.00px;font-size:12px;line-height:20px;color:#262626;transform:scaleX(0.9819);">Calibri</span>
<span class="t" style="left:206px;top:71.00px;font-size:12px;line-height:20px;color:#262626;transform:scaleX(0.8501);">11</span>
<span class="t" style="left:112.6px;top:93.00px;font-size:14px;line-height:20px;color:#3b3a39;transform:scaleX(0.7309);font-weight:700;">B</span>
<span class="t" style="left:137.2px;top:93.00px;font-size:15px;line-height:20px;color:#3b3a39;transform:scaleX(1.0000);font-style:italic;font-family:&quot;Liberation Serif&quot;,serif;">I</span>
<span class="t" style="left:159.4px;top:93.00px;font-size:12.4px;line-height:20px;color:#3b3a39;transform:scaleX(0.9271);">U</span>
<span class="t" style="left:203.3px;top:92.00px;font-size:16.5px;line-height:20px;color:#3b3a39;transform:scaleX(0.9986);">A</span>
<span class="t" style="left:228.6px;top:94.00px;font-size:12.3px;line-height:20px;color:#3b3a39;transform:scaleX(1.0484);">A</span>
<span class="t" style="left:196.7px;top:116.00px;font-size:14.5px;line-height:20px;color:#3b3a39;transform:scaleX(0.9719);">A</span>
<span class="t" style="left:149.6px;top:143.00px;font-size:11.3px;line-height:20px;color:#444444;transform:scaleX(0.9866);">Fuente</span>
<span class="t" style="left:281px;top:143.00px;font-size:11.3px;line-height:20px;color:#444444;transform:scaleX(1.0280);">Alineación</span>
<span class="t" style="left:391.6px;top:71.00px;font-size:12px;line-height:20px;color:#262626;transform:scaleX(0.9133);">General</span>
<span class="t" style="left:402.6px;top:143.00px;font-size:11.3px;line-height:20px;color:#444444;transform:scaleX(0.9879);">Número</span>
<span class="t" style="left:511.6px;top:70.00px;font-size:11.3px;line-height:20px;color:#262626;transform:scaleX(1.0714);">Formato condicional</span>
<span class="t" style="left:511.6px;top:93.00px;font-size:11.3px;line-height:20px;color:#262626;transform:scaleX(1.0674);">Dar formato como tabla</span>
<span class="t" style="left:511.6px;top:116.00px;font-size:11.3px;line-height:20px;color:#262626;transform:scaleX(0.9984);">Estilos de celda</span>
<span class="t" style="left:556.6px;top:143.00px;font-size:11.3px;line-height:20px;color:#444444;transform:scaleX(0.9615);">Estilos</span>
<span class="t" style="left:695px;top:70.00px;font-size:11.3px;line-height:20px;color:#262626;transform:scaleX(0.9736);">Insertar</span>
<span class="t" style="left:695px;top:93.00px;font-size:11.3px;line-height:20px;color:#262626;transform:scaleX(1.0193);">Eliminar</span>
<span class="t" style="left:695px;top:116.00px;font-size:11.3px;line-height:20px;color:#262626;transform:scaleX(1.0461);">Formato</span>
<span class="t" style="left:699.6px;top:143.00px;font-size:11.3px;line-height:20px;color:#444444;transform:scaleX(0.9297);">Celdas</span>
<span class="t" style="left:776.9px;top:102.00px;font-size:11.3px;line-height:20px;color:#262626;transform:scaleX(1.0118);">Edición</span>
<span class="t" style="left:13.3px;top:176.00px;font-size:12.4px;line-height:20px;color:#262626;transform:scaleX(0.9972);">D2</span>
<span class="t" style="left:263.2px;top:176.00px;font-size:12.5px;line-height:20px;color:#000;transform:scaleX(1.0629);">=CONTAR.SI(B2:B6;"Ciberseguridad")</span>
<span class="t" style="left:51.5px;top:208.00px;font-size:12.7px;line-height:20px;color:#262626;transform:scaleX(1.0000);">A</span>
<span class="t" style="left:141.0px;top:208.00px;font-size:12.7px;line-height:20px;color:#262626;transform:scaleX(1.0000);">B</span>
<span class="t" style="left:241.0px;top:208.00px;font-size:12.7px;line-height:20px;color:#262626;transform:scaleX(1.0000);">C</span>
<span class="t" style="left:321.0px;top:208.00px;font-size:12.7px;line-height:20px;color:#217346;transform:scaleX(1.0000);">D</span>
<span class="t" style="left:401.0px;top:208.00px;font-size:12.7px;line-height:20px;color:#262626;transform:scaleX(1.0000);">E</span>
<span class="t" style="left:481.0px;top:208.00px;font-size:12.7px;line-height:20px;color:#262626;transform:scaleX(1.0000);">F</span>
<span class="t" style="left:561.0px;top:208.00px;font-size:12.7px;line-height:20px;color:#262626;transform:scaleX(1.0000);">G</span>
<span class="t" style="left:641.0px;top:208.00px;font-size:12.7px;line-height:20px;color:#262626;transform:scaleX(1.0000);">H</span>
<span class="t" style="left:721.0px;top:208.00px;font-size:12.7px;line-height:20px;color:#262626;transform:scaleX(1.0000);">I</span>
<span class="t" style="left:801.0px;top:208.00px;font-size:12.7px;line-height:20px;color:#262626;transform:scaleX(1.0000);">J</span>
<span class="t" style="left:9.65px;top:229.00px;font-size:12.7px;line-height:20px;color:#262626;transform:scaleX(0.9487);">1</span>
<span class="t" style="left:9.65px;top:249.00px;font-size:12.7px;line-height:20px;color:#217346;transform:scaleX(0.9487);">2</span>
<span class="t" style="left:9.65px;top:269.00px;font-size:12.7px;line-height:20px;color:#262626;transform:scaleX(0.9487);">3</span>
<span class="t" style="left:9.65px;top:289.00px;font-size:12.7px;line-height:20px;color:#262626;transform:scaleX(0.9487);">4</span>
<span class="t" style="left:9.65px;top:309.00px;font-size:12.7px;line-height:20px;color:#262626;transform:scaleX(0.9487);">5</span>
<span class="t" style="left:9.65px;top:329.00px;font-size:12.7px;line-height:20px;color:#262626;transform:scaleX(0.9487);">6</span>
<span class="t" style="left:9.65px;top:349.00px;font-size:12.7px;line-height:20px;color:#262626;transform:scaleX(0.9487);">7</span>
<span class="t" style="left:9.65px;top:369.00px;font-size:12.7px;line-height:20px;color:#262626;transform:scaleX(0.9487);">8</span>
<span class="t" style="left:9.65px;top:389.00px;font-size:12.7px;line-height:20px;color:#262626;transform:scaleX(0.9487);">9</span>
<span class="t" style="left:6.3px;top:409.00px;font-size:12.7px;line-height:20px;color:#262626;transform:scaleX(0.9487);">10</span>
<span class="t" style="left:6.3px;top:429.00px;font-size:12.7px;line-height:20px;color:#262626;transform:scaleX(1.0173);">11</span>
<span class="t" style="left:6.3px;top:449.00px;font-size:12.7px;line-height:20px;color:#262626;transform:scaleX(0.9487);">12</span>
<span class="t" style="left:6.3px;top:469.00px;font-size:12.7px;line-height:20px;color:#262626;transform:scaleX(0.9487);">13</span>
<span class="t" style="left:6.3px;top:489.00px;font-size:12.7px;line-height:20px;color:#262626;transform:scaleX(0.9487);clip-path:inset(0 0 9px 0);">14</span>
<span class="t" style="left:28.8px;top:229.00px;font-size:12.7px;line-height:20px;color:#000;transform:scaleX(1.0409);font-weight:700;">Nombre</span>
<span class="t" style="left:88px;top:229.00px;font-size:12.7px;line-height:20px;color:#000;transform:scaleX(1.0277);font-weight:700;">Área</span>
<span class="t" style="left:28.6px;top:249.00px;font-size:12.7px;line-height:20px;color:#000;transform:scaleX(1.0031);">Juan</span>
<span class="t" style="left:88px;top:249.00px;font-size:12.7px;line-height:20px;color:#000;transform:scaleX(1.0866);">Ciberseguridad</span>
<span class="t" style="left:29px;top:269.00px;font-size:12.7px;line-height:20px;color:#000;transform:scaleX(1.0173);">María</span>
<span class="t" style="left:88px;top:269.00px;font-size:12.7px;line-height:20px;color:#000;transform:scaleX(1.1245);">Infraestructura</span>
<span class="t" style="left:29px;top:289.00px;font-size:12.7px;line-height:20px;color:#000;transform:scaleX(1.0780);">Pedro</span>
<span class="t" style="left:88px;top:289.00px;font-size:12.7px;line-height:20px;color:#000;transform:scaleX(1.0866);">Ciberseguridad</span>
<span class="t" style="left:28.8px;top:309.00px;font-size:12.7px;line-height:20px;color:#000;transform:scaleX(1.0497);">Ana</span>
<span class="t" style="left:88px;top:309.00px;font-size:12.7px;line-height:20px;color:#000;transform:scaleX(1.0715);">Centro de Datos</span>
<span class="t" style="left:29px;top:329.00px;font-size:12.7px;line-height:20px;color:#000;transform:scaleX(1.0094);">Luis</span>
<span class="t" style="left:88px;top:329.00px;font-size:12.7px;line-height:20px;color:#000;transform:scaleX(1.0866);">Ciberseguridad</span>
<span class="t" style="left:355.5px;top:249.00px;font-size:12.7px;line-height:20px;color:#000;transform:scaleX(0.9204);">3</span>
<span class="t" style="left:114px;top:504.00px;font-size:13px;line-height:20px;color:#217346;transform:scaleX(0.9744);font-weight:700;">Hoja1</span>
<span class="t" style="left:9.5px;top:529.00px;font-size:11.3px;line-height:20px;color:#444;transform:scaleX(0.9592);">Listo</span>
<span class="t" style="left:76px;top:529.00px;font-size:11.3px;line-height:20px;color:#444;transform:scaleX(1.0230);">Bloq Despl</span>
<span class="t" style="left:167.1px;top:529.00px;font-size:11.3px;line-height:20px;color:#444;transform:scaleX(1.0271);">Accesibilidad: todo correcto</span>
<span class="t" style="left:805.5px;top:529.00px;font-size:11.3px;line-height:20px;color:#444;transform:scaleX(0.9514);">100%</span>
<span class="t" style="left:339.6px;top:66.00px;font-size:9.8px;line-height:20px;color:#3b3a39;transform:scaleX(0.7702);">a</span>
<span class="t" style="left:346.2px;top:66.00px;font-size:9.8px;line-height:20px;color:#3b3a39;transform:scaleX(0.8436);">b</span>
<span class="t" style="left:339.4px;top:73.00px;font-size:9.8px;line-height:20px;color:#3b3a39;transform:scaleX(0.8153);">c</span>
<span class="t" style="left:322.6px;top:117.10px;font-size:11.5px;line-height:20px;color:#3b3a39;transform-origin:0 14.00px;transform:rotate(-45deg) scaleX(0.8908);">ab</span>
<span class="t" style="left:430.6px;top:94.80px;font-size:18.2px;line-height:20px;color:#484644;transform:scaleX(0.9214);">%</span>
<span class="t" style="left:458.6px;top:83.80px;font-size:34px;line-height:20px;color:#3b3a39;transform:scaleX(1.0000);font-weight:700;font-family:&quot;Liberation Serif&quot;,serif;">,</span>
<span class="t" style="left:399.2px;top:114.00px;font-size:9px;line-height:20px;color:#3b3a39;transform:scaleX(0.9048);">.0</span>
<span class="t" style="left:394px;top:122.40px;font-size:9px;line-height:20px;color:#3b3a39;transform:scaleX(0.9588);">.00</span>
<span class="t" style="left:418px;top:114.00px;font-size:9px;line-height:20px;color:#3b3a39;transform:scaleX(0.9588);">.00</span>
<span class="t" style="left:423.2px;top:122.40px;font-size:9px;line-height:20px;color:#3b3a39;transform:scaleX(0.9048);">.0</span>
<span class="t" style="left:223.6px;top:173.00px;font-size:15.5px;line-height:20px;color:#4a4a4a;transform:scaleX(1.0000);font-weight:700;font-style:italic;font-family:&quot;Liberation Serif&quot;,serif;">f</span>
<span class="t" style="left:228.9px;top:175.30px;font-size:11px;line-height:20px;color:#4a4a4a;transform:scaleX(1.0000);font-weight:700;font-style:italic;font-family:&quot;Liberation Serif&quot;,serif;">x</span>
</div>
</body></html>
